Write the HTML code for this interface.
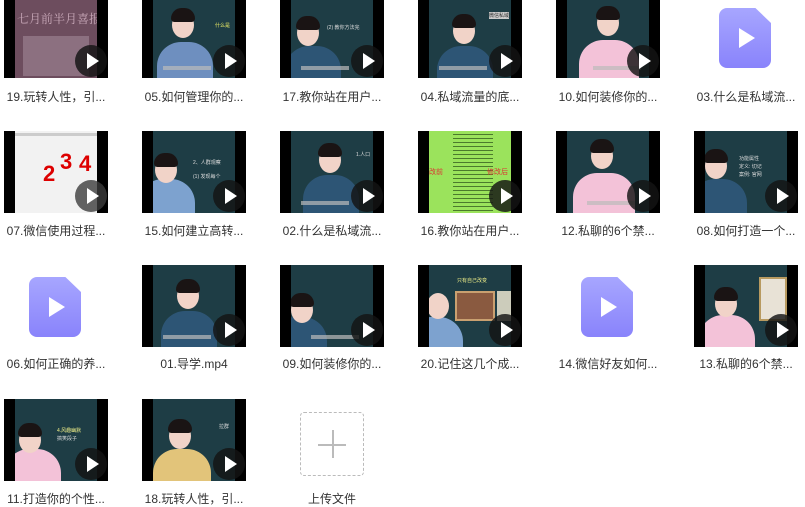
<!DOCTYPE html>
<html><head><meta charset="utf-8"><style>
*{margin:0;padding:0;box-sizing:border-box}
html,body{width:805px;height:493px;overflow:hidden;background:#fff;font-family:"Liberation Sans","Noto Sans CJK SC",sans-serif}
.c{position:absolute;width:104px;height:82px}
.t{position:absolute;left:0;top:0;width:104px;height:82px;background:#000;overflow:hidden}
.s{position:absolute;left:11px;top:0;width:82px;height:82px;background:#1e3d45;overflow:hidden}
.hd{position:absolute;width:22px;height:26px;border-radius:50%;background:#f1d3c8}
.hair{position:absolute;width:24px;height:14px;border-radius:12px 12px 4px 4px;background:#1a1414}
.bd{position:absolute;width:56px;height:40px;border-radius:24px 24px 0 0;background:#3f6a99}
.p{position:absolute;right:1px;bottom:1px;width:32px;height:32px;border-radius:50%;background:rgba(20,20,20,.82)}
.p:after{content:"";position:absolute;left:12px;top:8px;border-left:12px solid #fff;border-top:8px solid transparent;border-bottom:8px solid transparent}
.l{position:absolute;left:-17px;width:138px;text-align:center;font-size:12px;color:#333;white-space:nowrap}
.ic{position:absolute;left:25px;top:12px;width:52px;height:60px;border-radius:8px;background:linear-gradient(#a7a6ff,#8983fb);clip-path:polygon(0 0,70% 0,100% 25%,100% 100%,0 100%)}
.ic:after{content:"";position:absolute;left:20px;top:20px;border-left:16px solid #fff;border-top:10px solid transparent;border-bottom:10px solid transparent}
.tx{position:absolute;font-size:5px;color:#ddd}
.sub{position:absolute;left:10px;bottom:8px;width:48px;height:4px;background:#bbb;opacity:.7}
</style></head><body>

<!-- Row 1 -->
<div class="c" style="left:4px;top:-4px"><div class="t"><div class="s" style="background:#6d4d5e"><div style="position:absolute;left:2px;top:14px;color:#c9a9b9;font-size:12px;font-family:'Noto Serif CJK SC',serif;white-space:nowrap">七月前半月喜报</div><div style="position:absolute;left:8px;top:40px;width:66px;height:40px;background:#8c7080"></div></div><div class="p"></div></div><div class="l" style="top:92px">19.玩转人性，引...</div></div>

<div class="c" style="left:142px;top:-4px"><div class="t"><div class="s"><div class="bd" style="left:4px;top:46px;background:#6e8fbf"></div><div class="hd" style="left:19px;top:16px"></div><div class="hair" style="left:18px;top:12px"></div><div class="tx" style="left:62px;top:26px;color:#ee6">什么是</div><div class="sub"></div></div><div class="p"></div></div><div class="l" style="top:92px">05.如何管理你的...</div></div>

<div class="c" style="left:280px;top:-4px"><div class="t"><div class="s"><div class="bd" style="left:-6px;top:50px;background:#2d5575"></div><div class="hd" style="left:6px;top:24px"></div><div class="hair" style="left:5px;top:20px"></div><div class="tx" style="left:36px;top:28px">(2) 教你方法完</div><div class="sub"></div></div><div class="p"></div></div><div class="l" style="top:92px">17.教你站在用户...</div></div>

<div class="c" style="left:418px;top:-4px"><div class="t"><div class="s"><div class="bd" style="left:8px;top:50px;background:#2d5575"></div><div class="hd" style="left:24px;top:22px"></div><div class="hair" style="left:23px;top:18px"></div><div class="tx" style="left:60px;top:16px;background:#ccc;color:#333">微信私域</div><div class="sub"></div></div><div class="p"></div></div><div class="l" style="top:92px">04.私域流量的底...</div></div>

<div class="c" style="left:556px;top:-4px"><div class="t"><div class="s"><div class="bd" style="left:12px;top:44px;background:#f3c2d8;width:60px"></div><div class="hd" style="left:30px;top:14px"></div><div class="hair" style="left:29px;top:10px"></div><div class="sub" style="left:26px"></div></div><div class="p"></div></div><div class="l" style="top:92px">10.如何装修你的...</div></div>

<div class="c" style="left:694px;top:-4px"><div class="ic"></div><div class="l" style="top:92px">03.什么是私域流...</div></div>

<!-- Row 2 -->
<div class="c" style="left:4px;top:131px"><div class="t"><div class="s" style="background:#f2f2f2"><div style="position:absolute;left:28px;top:30px;color:#d00;font-size:22px;font-weight:bold">2</div><div style="position:absolute;left:45px;top:18px;color:#d00;font-size:22px;font-weight:bold">3</div><div style="position:absolute;left:64px;top:20px;color:#d00;font-size:22px;font-weight:bold">4</div><div style="position:absolute;left:0;top:2px;width:82px;height:3px;background:#ccc"></div></div><div class="p" style="background:rgba(60,60,60,.8)"></div></div><div class="l" style="top:91px">07.微信使用过程...</div></div>

<div class="c" style="left:142px;top:131px"><div class="t"><div class="s"><div class="bd" style="left:-14px;top:48px;background:#7da2cf"></div><div class="hd" style="left:2px;top:26px"></div><div class="hair" style="left:1px;top:22px"></div><div class="tx" style="left:40px;top:28px">2、人群观察</div><div class="tx" style="left:40px;top:42px">(1) 发现每个</div></div><div class="p"></div></div><div class="l" style="top:91px">15.如何建立高转...</div></div>

<div class="c" style="left:280px;top:131px"><div class="t"><div class="s"><div class="bd" style="left:12px;top:44px;background:#2d5575"></div><div class="hd" style="left:28px;top:16px"></div><div class="hair" style="left:27px;top:12px"></div><div class="tx" style="left:65px;top:20px">1.人口</div><div class="sub"></div></div><div class="p"></div></div><div class="l" style="top:91px">02.什么是私域流...</div></div>

<div class="c" style="left:418px;top:131px"><div class="t"><div class="s" style="background:#9be35c;left:11px"><div style="position:absolute;left:24px;top:0;width:40px;height:82px;background:repeating-linear-gradient(#9be35c 0 3px,#4b7a2c 3px 4px)"></div><div style="position:absolute;left:0;top:36px;color:#d33;font-size:7px">改前</div><div style="position:absolute;left:58px;top:36px;color:#d33;font-size:7px">修改后</div></div><div class="p"></div></div><div class="l" style="top:91px">16.教你站在用户...</div></div>

<div class="c" style="left:556px;top:131px"><div class="t"><div class="s"><div class="bd" style="left:6px;top:42px;background:#f3c2d8;width:62px"></div><div class="hd" style="left:24px;top:12px"></div><div class="hair" style="left:23px;top:8px"></div><div class="sub" style="left:20px"></div></div><div class="p"></div></div><div class="l" style="top:91px">12.私聊的6个禁...</div></div>

<div class="c" style="left:694px;top:131px"><div class="t"><div class="s"><div class="bd" style="left:-14px;top:48px;background:#2d5575"></div><div class="hd" style="left:0;top:22px"></div><div class="hair" style="left:-1px;top:18px"></div><div class="tx" style="left:34px;top:24px">功能属性</div><div class="tx" style="left:34px;top:32px">定义: 切记</div><div class="tx" style="left:34px;top:40px">案例: 官网</div></div><div class="p"></div></div><div class="l" style="top:91px">08.如何打造一个...</div></div>

<!-- Row 3 -->
<div class="c" style="left:4px;top:265px"><div class="ic"></div><div class="l" style="top:90px">06.如何正确的养...</div></div>

<div class="c" style="left:142px;top:265px"><div class="t"><div class="s"><div class="bd" style="left:8px;top:46px;background:#2d5575"></div><div class="hd" style="left:24px;top:18px"></div><div class="hair" style="left:23px;top:14px"></div><div class="sub"></div></div><div class="p"></div></div><div class="l" style="top:90px">01.导学.mp4</div></div>

<div class="c" style="left:280px;top:265px"><div class="t"><div class="s"><div class="bd" style="left:-20px;top:52px;background:#2d5575"></div><div class="hd" style="left:0;top:32px"></div><div class="hair" style="left:-1px;top:28px"></div><div class="sub" style="left:20px"></div></div><div class="p"></div></div><div class="l" style="top:90px">09.如何装修你的...</div></div>

<div class="c" style="left:418px;top:265px"><div class="t"><div class="s"><div class="bd" style="left:-22px;top:52px;background:#7da2cf"></div><div class="hd" style="left:-2px;top:28px"></div><div class="tx" style="left:28px;top:12px;color:#ee8">只有自己改变</div><div style="position:absolute;left:26px;top:26px;width:40px;height:30px;background:#8a5a40;border:2px solid #c9a070"></div><div style="position:absolute;left:68px;top:26px;width:14px;height:30px;background:#ccb"></div></div><div class="p"></div></div><div class="l" style="top:90px">20.记住这几个成...</div></div>

<div class="c" style="left:556px;top:265px"><div class="ic"></div><div class="l" style="top:90px">14.微信好友如何...</div></div>

<div class="c" style="left:694px;top:265px"><div class="t"><div class="s"><div class="bd" style="left:-6px;top:50px;background:#f3c2d8"></div><div class="hd" style="left:10px;top:26px"></div><div class="hair" style="left:9px;top:22px"></div><div style="position:absolute;left:54px;top:12px;width:28px;height:44px;background:#e8e2d6;border:2px solid #b89a60"></div></div><div class="p"></div></div><div class="l" style="top:90px">13.私聊的6个禁...</div></div>

<!-- Row 4 -->
<div class="c" style="left:4px;top:399px"><div class="t"><div class="s"><div class="bd" style="left:-10px;top:50px;background:#f3c2d8"></div><div class="hd" style="left:4px;top:28px"></div><div class="hair" style="left:3px;top:24px"></div><div class="tx" style="left:42px;top:28px;color:#ee8">4.风趣幽默</div><div class="tx" style="left:42px;top:36px">搞笑段子</div></div><div class="p"></div></div><div class="l" style="top:91px">11.打造你的个性...</div></div>

<div class="c" style="left:142px;top:399px"><div class="t"><div class="s"><div class="bd" style="left:0;top:50px;background:#e2c47a;width:58px"></div><div class="hd" style="left:16px;top:24px"></div><div class="hair" style="left:15px;top:20px"></div><div class="tx" style="left:66px;top:24px">拉群</div></div><div class="p"></div></div><div class="l" style="top:91px">18.玩转人性，引...</div></div>

<div style="position:absolute;left:300px;top:412px;width:64px;height:64px;border:1px dashed #bbb;border-radius:4px"><div style="position:absolute;left:17px;top:31px;width:28px;height:1.5px;background:#bbb"></div><div style="position:absolute;left:31px;top:17px;width:1.5px;height:28px;background:#bbb"></div></div>
<div class="l" style="left:263px;top:490px">上传文件</div>

</body></html>
